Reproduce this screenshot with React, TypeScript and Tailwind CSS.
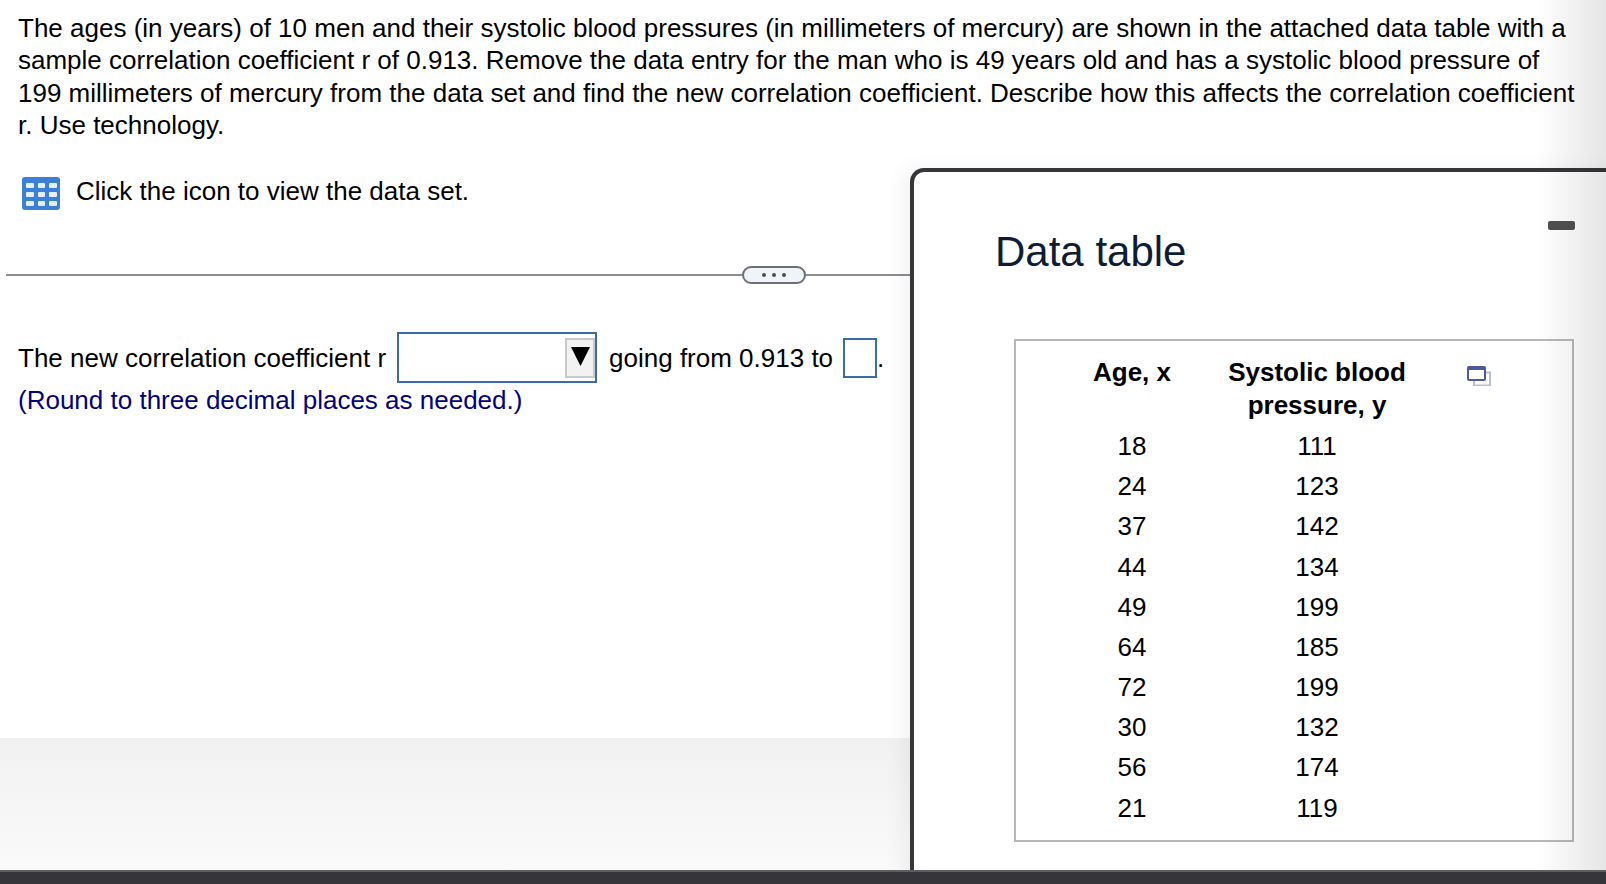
import React from 'react';

const rows: [number, number][] = [
  [18, 111],
  [24, 123],
  [37, 142],
  [44, 134],
  [49, 199],
  [64, 185],
  [72, 199],
  [30, 132],
  [56, 174],
  [21, 119],
];

const GridIcon = () => (
  <svg width="38" height="33" viewBox="0 0 38 33" className="shrink-0">
    <rect width="38" height="33" rx="3" fill="#3c7fd6" />
    <g fill="#e4effc">
      <rect x="4" y="6" width="8" height="5" rx="1" />
      <rect x="16" y="6" width="7" height="5" rx="1" />
      <rect x="27" y="6" width="8" height="5" rx="1" />
      <rect x="4" y="15" width="8" height="5" rx="1" />
      <rect x="16" y="15" width="7" height="5" rx="1" />
      <rect x="27" y="15" width="8" height="5" rx="1" />
      <rect x="4" y="24" width="8" height="5" rx="1" />
      <rect x="16" y="24" width="7" height="5" rx="1" />
      <rect x="27" y="24" width="8" height="5" rx="1" />
    </g>
  </svg>
);

const CopyIcon = () => (
  <svg width="24" height="20" viewBox="0 0 24 20" fill="none">
    <rect x="7" y="6.5" width="16" height="13" stroke="#b9bdd9" strokeWidth="2" />
    <rect x="1" y="1" width="17" height="13" rx="1" fill="#ffffff" stroke="#4d5aa0" strokeWidth="2" />
    <rect x="1" y="1" width="17" height="3" fill="#4d5aa0" />
  </svg>
);

const DataTable = () => (
  <div className="absolute left-[910px] top-[168px] bottom-0 w-[720px] rounded-tl-[14px] border-l-4 border-t-4 border-[#36363a] bg-white pl-[100px] shadow-[-8px_0_20px_rgba(0,0,0,0.05)]">
    <div className="flex h-[167px] items-start pr-[56px] pt-[50px]">
      <h2 className="-ml-[19px] flex-none text-[42px] leading-[60px] text-[#0f1c36]">Data table</h2>
    </div>
    <div className="h-[503px] w-[560px] border-2 border-[#b8b8b8] pl-[61px] pt-[15px] text-black">
      <div className="grid grid-cols-[110px_260px_auto]">
        <div className="text-center font-bold leading-[33px]">Age, x</div>
        <div className="text-center font-bold leading-[33px]">
          Systolic blood
          <br />
          pressure, y
        </div>
        <div className="pl-5 pt-[10px]">
          <CopyIcon />
        </div>
      </div>
      <div className="mt-[4px] grid grid-cols-[110px_260px]">
        {rows.map(([age, bp], i) => (
          <React.Fragment key={i}>
            <div className="text-center leading-[40.17px]">{age}</div>
            <div className="text-center leading-[40.17px]">{bp}</div>
          </React.Fragment>
        ))}
      </div>
    </div>
  </div>
);

const App: React.FC = () => {
  return (
    <div className="relative flex h-[884px] w-full flex-col overflow-hidden bg-white font-['Liberation_Sans',Arial,sans-serif] text-[26px] text-black">
      <div className="flex flex-1 flex-col">
        <div className="h-[738px]">
          <p className="pl-[18px] pt-[12px] leading-[32.3px]">
            The ages (in years) of 10 men and their systolic blood pressures (in millimeters of mercury) are shown in the attached data table with a
            <br />
            sample correlation coefficient r of 0.913. Remove the data entry for the man who is 49 years old and has a systolic blood pressure of
            <br />
            199 millimeters of mercury from the data set and find the new correlation coefficient. Describe how this affects the correlation coefficient
            <br />
            r. Use technology.
          </p>

          <div className="mt-[36px] flex items-start gap-4 pl-[22px]">
            <GridIcon />
            <span className="-mt-[2px] leading-[32px]">Click the icon to view the data set.</span>
          </div>

          {/* divider with the little dots pill */}
          <div className="relative ml-[6px] mt-[64px] h-[2px] w-[904px] bg-[#8a8d90]">
            <div className="absolute left-[736px] top-[-8px] flex h-[18px] w-[64px] items-center justify-center gap-[6px] rounded-full border-2 border-[#6b7078] bg-[#f0f3f7]">
              <span className="h-[4px] w-[4px] rounded-full bg-[#4a4f57]" />
              <span className="h-[4px] w-[4px] rounded-full bg-[#4a4f57]" />
              <span className="h-[4px] w-[4px] rounded-full bg-[#4a4f57]" />
            </div>
          </div>

          <div className="mt-[56px] flex h-[51px] items-center pl-[18px]">
            <span className="pt-[2px]">The new correlation coefficient r</span>
            <div className="ml-[11px] flex h-[51px] w-[200px] items-center justify-end border-2 border-[#3d6aa8] bg-white">
              <div className="flex h-[40px] w-[30px] items-start justify-center border-2 border-[#c9c9c9] bg-[#f2f2f2] pt-[7px]">
                <svg width="19" height="19" viewBox="0 0 19 19">
                  <polygon points="0,0 19,0 9.5,19" fill="#000000" />
                </svg>
              </div>
            </div>
            <span className="ml-[12px] pt-[2px]">going from 0.913 to</span>
            <div className="ml-[10px] h-[40px] w-[34px] border-2 border-[#3d6aa8] bg-white" />
            <span className="pt-[2px]">.</span>
          </div>
          <p className="mt-[1px] pl-[18px] leading-[32px] text-[#000080]">(Round to three decimal places as needed.)</p>
        </div>
        <div className="flex-1 bg-gradient-to-b from-[#f1f1f1] to-[#fafafa]" />
      </div>

      <DataTable />

      {/* soft shade at the right edge */}
      <div className="pointer-events-none absolute bottom-[14px] right-0 top-0 w-[70px] bg-gradient-to-r from-transparent to-black/10" />

      {/* window controls */}
      <div className="absolute left-[1548px] top-[221px] h-[9px] w-[27px] rounded-[2px] bg-[#4d4d50]" />

      <div className="z-10 h-[14px] border-t-2 border-[#5e5e62] bg-[#36363a]" />
    </div>
  );
};

export default App;
